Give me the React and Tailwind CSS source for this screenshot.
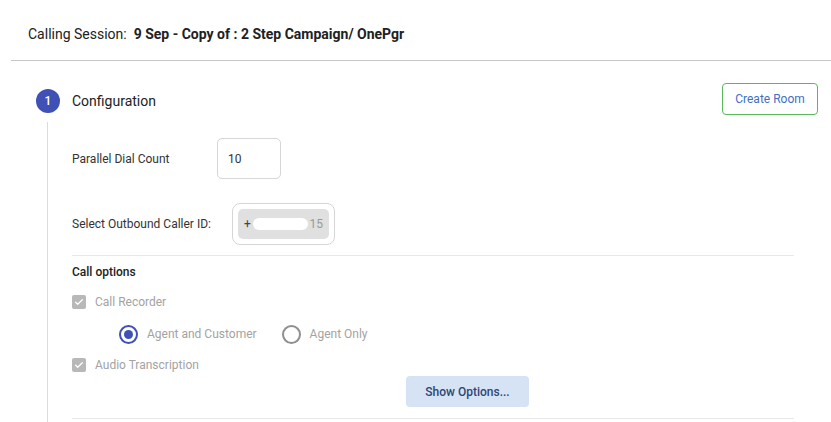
import React from 'react';

const Check = () => (
  <span className="w-[14px] h-[14px] bg-[#b8b8b8] rounded-[2px] flex items-center justify-center shrink-0">
    <svg width="10" height="10" viewBox="0 0 24 24" fill="none" stroke="white" strokeWidth="3" strokeLinecap="round" strokeLinejoin="round">
      <path d="M4 12.5l5 5L20 6.5" />
    </svg>
  </span>
);

const Radio = ({ checked }) => (
  <span
    className={
      checked
        ? 'w-[19px] h-[19px] rounded-full border-2 border-[#3f51b5] flex items-center justify-center shrink-0'
        : 'block w-[19px] h-[19px] rounded-full border-2 border-[#8f8f8f] shrink-0'
    }
  >
    {checked && <span className="w-[9px] h-[9px] rounded-full bg-[#3f51b5]" />}
  </span>
);

export default function App() {
  return (
    <div className="w-[831px] h-[422px] overflow-hidden bg-white text-[#212121] font-['Roboto',sans-serif]">
      {/* Header */}
      <div className="pt-[24px] pl-[28px] h-[60px] text-[14px] leading-[20px]">
        Calling Session:&nbsp; <span className="font-bold">9 Sep - Copy of : 2 Step Campaign/ OnePgr</span>
      </div>
      <div className="ml-[11px] border-t border-[#c6c6c6]" />

      {/* Step header */}
      <div className="flex items-start mt-[22px] pl-[36px] pr-[13px]">
        <div className="w-[24px] h-[24px] mt-[6px] rounded-full bg-[#3f51b5] text-white text-[12px] font-medium flex items-center justify-center">
          1
        </div>
        <div className="ml-[12px] mt-[8px] text-[14px] leading-[20px] text-[#212121]">Configuration</div>
        <button className="ml-auto w-[96px] h-[32px] border border-[#5cb85c] rounded-[4px] text-[12px] text-[#3f6fc4]">
          Create Room
        </button>
      </div>

      {/* Step body */}
      <div className="ml-[47px] mt-[7px] border-l border-[#dcdcdc] pl-[24px] h-[320px]">
        <div className="w-[722px] pt-[16px]">
          <div className="flex items-center">
            <div className="w-[145px] text-[12px] text-[#333]">Parallel Dial Count</div>
            <div className="w-[64px] h-[41px] border border-[#d6d6d6] rounded-[5px] pl-[10px] text-[12px] text-[#333] flex items-center">
              10
            </div>
          </div>

          <div className="flex items-center mt-[24px]">
            <div className="w-[160px] text-[12px] text-[#333]">Select Outbound Caller ID:</div>
            <div className="w-[103px] h-[42px] border border-[#d6d6d6] rounded-[8px] p-[5px]">
              <div className="h-full bg-[#e0e0e0] rounded-[5px] flex items-center px-[6px] text-[12px] text-[#444]">
                <span>+</span>
                <span className="w-[58px] h-[12px] bg-white rounded-full ml-[2px]" />
                <span className="ml-[2px] text-[#999]">15</span>
              </div>
            </div>
          </div>

          <div className="mt-[10px] border-t border-[#e8e8e8]" />

          <div className="mt-[8px] text-[12px] leading-[16px] font-medium text-[#212121]">Call options</div>

          <div className="flex items-center h-[20px] mt-[12px] text-[12px] text-[#a3a3a3]">
            <Check />
            <span className="ml-[9px]">Call Recorder</span>
          </div>

          <div className="flex items-center h-[20px] mt-[12px] pl-[47px] text-[12px] text-[#a3a3a3]">
            <Radio checked />
            <span className="ml-[9px]">Agent and Customer</span>
            <span className="ml-[25px]">
              <Radio />
            </span>
            <span className="ml-[9px]">Agent Only</span>
          </div>

          <div className="flex items-center h-[20px] mt-[11px] text-[12px] text-[#a3a3a3]">
            <Check />
            <span className="ml-[9px]">Audio Transcription</span>
          </div>

          <button className="mt-[1px] ml-[334px] w-[123px] h-[31px] rounded-[4px] bg-[#d6e3f4] text-[12px] font-medium text-[#2d4677]">
            Show Options...
          </button>

          <div className="mt-[11px] border-t border-[#e8e8e8]" />
        </div>
      </div>
    </div>
  );
}
